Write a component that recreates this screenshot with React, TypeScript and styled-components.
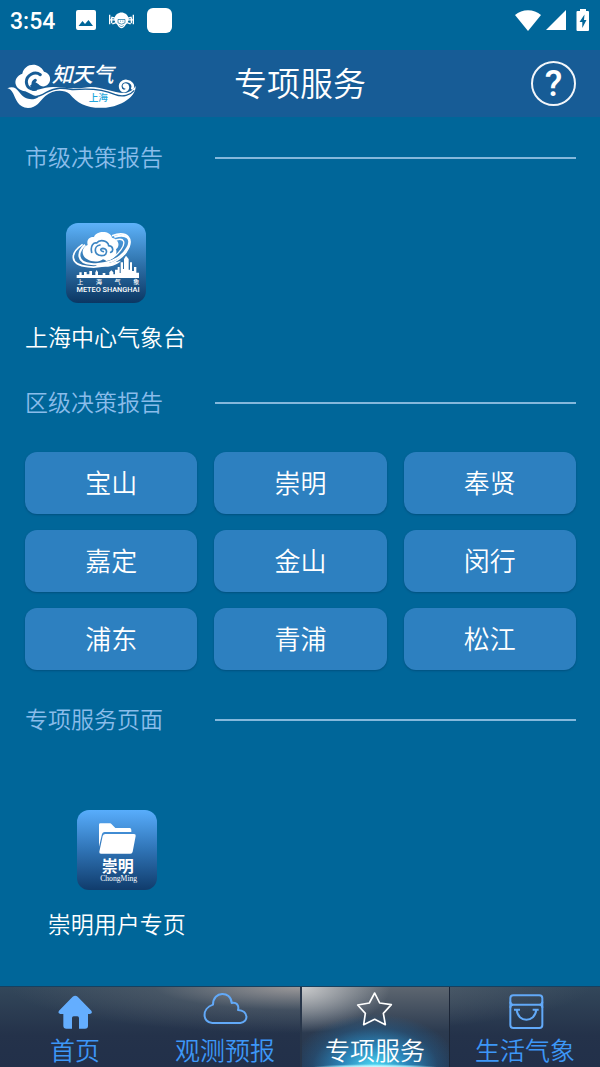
import styled, { createGlobalStyle } from 'styled-components'

const GlobalStyle = createGlobalStyle`
    * {
        box-sizing: border-box;
    }
    body {
        margin: 0;
        background: #006699;
        color: #fff;
        font-family: "Noto Sans CJK SC", sans-serif;
        font-weight: 350;
    }
    a {
        color: inherit;
        text-decoration: none;
    }
    button {
        font: inherit;
        color: inherit;
        cursor: pointer;
    }
`;

const Page = styled.div`
    display: flex;
    flex-direction: column;
    min-height: 100vh;
`;

const StatusBar = styled.div`
    display: flex;
    align-items: center;
    justify-content: space-between;
    height: 50px;
    padding: 0 10px 10px;
`;

const StatusGroup = styled.div<{ $gap: number }>`
    display: flex;
    align-items: center;
    gap: ${({ $gap }) => $gap}px;
`;

const Clock = styled.span`
    font-family: Roboto, sans-serif;
    font-size: 23px;
    font-weight: 500;
    line-height: 24px;
    padding: 3px 8px 0 0;
`;

const AppBadge = styled.span`
    width: 25px;
    height: 25px;
    border-radius: 6px;
    background: #fff;
`;

const Header = styled.header`
    display: grid;
    grid-template-columns: 1fr auto 1fr;
    align-items: center;
    height: 67px;
    background: #175c96;
`;

const Title = styled.h1`
    margin: 0;
    padding-bottom: 4px;
    font-size: 33px;
    font-weight: 350;
    line-height: 48px;
`;

const HelpButton = styled.button`
    justify-self: end;
    width: 45px;
    height: 45px;
    margin-right: 24px;
    padding: 0;
    border: 2px solid #f2f6fa;
    border-radius: 50%;
    background: none;
    font-family: Roboto, sans-serif;
    font-size: 36px;
    font-weight: 500;
    line-height: 42px;
`;

const Main = styled.main`
    flex: 1;
    padding: 23px 24px 0 25px;
`;

const SectionHead = styled.div`
    display: flex;
    align-items: center;
    gap: 50px;
    &::after {
        content: '';
        flex: 1;
        height: 2px;
        background: #84b8dc;
    }
`;

const SectionTitle = styled.h2`
    margin: 0;
    min-width: 140px;
    padding-bottom: 4px;
    color: #8abcea;
    font-size: 23px;
    font-weight: 350;
    line-height: 32px;
`;

const AppRow = styled.div<{ $columns?: string; $top: number; $bottom: number }>`
    display: grid;
    grid-template-columns: ${({ $columns }) => $columns || 'max-content'};
    padding: ${({ $top, $bottom }) => `${$top}px 0 ${$bottom}px`};
`;

const AppLink = styled.a`
    display: flex;
    flex-direction: column;
    align-items: center;
    gap: 16px;
    padding-bottom: 2px;
    font-size: 23px;
    line-height: 34px;
`;

const DistrictGrid = styled.div`
    display: grid;
    grid-template-columns: repeat(3, 1fr);
    gap: 16px 17px;
    padding: 31px 0 32px;
`;

const DistrictButton = styled.button`
    height: 62px;
    padding: 0 0 2px;
    border: 0;
    border-radius: 12px;
    background: #2d80c0;
    box-shadow: 0 1px 2px rgba(0, 40, 80, 0.35);
    font-size: 26px;
    line-height: 38px;
`;

const TabBar = styled.nav`
    display: grid;
    grid-template-columns: repeat(4, 1fr);
    height: 81px;
    border-top: 1px solid #17405f;
    background:
        radial-gradient(ellipse 290px 46px at 50% 0, rgba(190, 180, 175, 0.75), rgba(120, 125, 130, 0.3) 50%, transparent),
        linear-gradient(#33475a, #24324a 60%, #22304a);
`;

const Tab = styled.a<{ $active?: boolean }>`
    display: flex;
    flex-direction: column;
    align-items: center;
    padding-top: 3px;
    font-size: 25px;
    line-height: 38px;
    color: ${({ $active }) => ($active ? '#fff' : '#3d97f7')};
    ${({ $active }) => $active && `
        background:
            radial-gradient(ellipse 66px 4px at 50% 100%, #fff, rgba(180, 245, 255, 0.8) 60%, transparent),
            radial-gradient(ellipse 84px 54px at 50% 100%, #50e0fa, rgba(42, 150, 210, 0.8) 40%, rgba(36, 100, 150, 0.4) 75%, transparent),
            radial-gradient(ellipse 90px 46px at 0 0, rgba(215, 215, 215, 0.9), transparent),
            linear-gradient(#5d6670, #2c3b50 55%, #26354d);
        box-shadow: inset 2px 0 #28364a, inset -1px 0 #1b2536;
    `}
    svg {
        display: block;
    }
`;

const ImageIcon = () => (
    <svg width="20" height="20" viewBox="0 0 20 20">
        <path fill="#fff" fillRule="evenodd" d="M2 0h16a2 2 0 0 1 2 2v16a2 2 0 0 1-2 2H2a2 2 0 0 1-2-2V2a2 2 0 0 1 2-2zM2.500 16h14.500l-4.500-6-3.500 4-2.500-3z" />
    </svg>
)

const DroneIcon = () => (
    <svg width="25" height="17" viewBox="0 0 75 50">
        <path d="M2 8v28M73 8v28M8 17v16M67 17v16M2 23h20M53 23h20M7 15l19 5M68 15l-19 5M10 35l18-6M65 35l-18-6" stroke="#fff" strokeWidth="4" fill="none" />
        <path d="M16 20C20-5 55-5 59 20C58 30 54 34 50 38C43 52 32 52 25 38C21 34 17 30 16 20z" fill="#fff" />
        <path d="M27 22h21v10q-10 8-21 0zM33 27h3M40 27h3M31 40c4 4 9 4 13 0" stroke="#006699" strokeWidth="2" fill="none" />
    </svg>
)

const WifiIcon = () => (
    <svg width="26" height="21" viewBox="0 0 26 21">
        <path fill="#fff" d="M0 5C7-1.500 19-1.500 26 5L13 21z" />
    </svg>
)

const SignalIcon = () => (
    <svg width="20" height="20" viewBox="0 0 20 20">
        <path fill="#fff" d="M20 0v20H0z" />
    </svg>
)

const BatteryIcon = () => (
    <svg width="14" height="22" viewBox="0 0 14 22">
        <path fill="#fff" d="M4 0h6v2h2q1 0 1 1v18q0 1-1 1H1.500q-1 0-1-1V3q0-1 1-1H4z" />
        <path fill="#006699" d="M8.500 5.500L3.500 13h2.800v6L10.500 11H8z" />
    </svg>
)

const Logo = () => (
    <svg width="145" height="66" viewBox="0 0 435 198" role="img" aria-label="知天气 上海">
        <path fill="#fff" d="M76 121C42 116 35 80 67 68C72 38 115 29 132 62C151 66 156 88 144 100C135 110 121 107 115 99L104 92L90 104L98 120L137 110C171 103 211 117 252 110C300 101 335 127 374 126C391 124 400 115 407 105C408 139 361 166 318 170C264 174 232 158 209 129C190 114 158 117 136 135C119 150 111 171 84 171C54 169 48 145 40 128C35 118 29 113 22 112C38 105 48 110 58 124C72 145 98 151 116 138C105 136 94 130 76 121z" />
        <path fill="none" stroke="#175c96" strokeWidth="9" strokeLinecap="round" d="M121 71C104 59 79 72 79 93C80 109 91 117 107 115M106 88C94 96 99 107 111 107" />
        <path fill="none" stroke="#175c96" strokeWidth="4" d="M74 130C99 145 120 136 139 124C171 107 190 111 219 116C271 111 314 117 344 130C369 140 391 132 403 118" />
        <path fill="none" stroke="#fff" strokeWidth="8" strokeLinecap="round" d="M376 109C367 105 374 97 382 103C388 116 372 126 363 115C355 100 368 87 381 90C394 91 402 103 397 112" />
        <text x="155" y="92" fill="#fff" fontSize="62" fontWeight="500" fontStyle="italic">知天气</text>
        <text x="266" y="151" fill="#23a7dc" fontSize="29" fontWeight="500">上海</text>
    </svg>
)

const MeteoIcon = () => (
    <svg width="80" height="80" viewBox="0 0 240 240" aria-hidden="true">
        <defs>
            <linearGradient id="meteoFill" x2="0" y2="1">
                <stop offset="0" stopColor="#5db2fa" />
                <stop offset="0.5" stopColor="#2f73ac" />
                <stop offset="1" stopColor="#0b3763" />
            </linearGradient>
        </defs>
        <rect width="240" height="240" rx="36" fill="url(#meteoFill)" />
        <g fill="none" stroke="#fff">
            <path strokeWidth="6" d="M145 42C180 31 201 45 183 76C166 108 118 128 76 123C31 119 33 88 57 65" />
            <path strokeWidth="5" d="M138 38C185 22 206 48 181 86C159 117 111 137 66 131C7 125 13 89 50 64" />
            <path strokeWidth="4" d="M150 51C175 43 180 59 165 80C153 97 139 107 119 113" />
        </g>
        <path fill="#fff" d="M64 109C43 97 47 72 65 66C60 46 76 40 84 42C91 22 134 22 138 44C159 48 163 70 150 79C158 103 129 119 111 109C98 119 76 117 64 109zM100 121C121 119 134 122 165 113C146 134 112 133 88 130z" />
        <path fill="none" stroke="#3d86c3" strokeWidth="5" strokeLinecap="round" d="M112 86C103 84 101 77 111 76C127 77 124 98 107 98C82 96 83 69 102 66M77 88C72 66 84 58 92 60C101 48 126 52 128 68C144 70 142 86 134 88" />
        <path fill="#fff" d="M32 165V156H40V148H47V156H54V147H62V154H70V144H78V156H88V148L92 141L96 148V156H110V150H118V156H130V148L136 142L142 148V154H147V140H155V132H161V150H164V118H171V138H174V108L180 98L188 108V140H192V118H198V144H204V132H211V149H219V165z" />
        <g fill="#fff" fontSize="18" fontWeight="500">
            <text x="34" y="182">上</text>
            <text x="90" y="182">海</text>
            <text x="146" y="182">气</text>
            <text x="202" y="182">象</text>
        </g>
        <text x="126" y="206" textAnchor="middle" fill="#fff" fontSize="22" fontFamily="Roboto, sans-serif" fontWeight="500">METEO SHANGHAI</text>
    </svg>
)

const FolderIcon = () => (
    <svg width="80" height="80" viewBox="0 0 240 240" aria-hidden="true">
        <defs>
            <linearGradient id="folderFill" x2="0" y2="1">
                <stop offset="0" stopColor="#58adfc" />
                <stop offset="0.5" stopColor="#2f73b5" />
                <stop offset="1" stopColor="#103c6c" />
            </linearGradient>
        </defs>
        <rect width="240" height="240" rx="36" fill="url(#folderFill)" />
        <path fill="#fff" d="M66 110V44q0-4 4-4h29q3 0 5 3l11 11h43q5 0 5 6v6H83q-6 0-8 6z" />
        <path fill="#fff" d="M85 72h86q6 0 5 6l-9 47q-1 6-7 6H72q-6 0-5-6l10-47q2-6 8-6z" />
        <text x="122" y="185" textAnchor="middle" fill="#fff" fontSize="48" fontWeight="700">崇明</text>
        <text x="125" y="212" textAnchor="middle" fill="#fff" fontSize="23" fontWeight="400" fontFamily="'Liberation Serif', serif">ChongMing</text>
    </svg>
)

const HomeIcon = () => (
    <svg width="48" height="40" viewBox="0 0 144 120">
        <path fill="#64aeff" d="M65 20q8-6 15 0l41 42q5 8-4 10h-6v35q0 9-9 9H84V84q0-5-5-5H68q-5 0-5 5v32H46q-9 0-9-9V72h-9q-9-2-4-10z" />
    </svg>
)

const CloudIcon = () => (
    <svg width="48" height="40" viewBox="0 0 144 120">
        <path fill="none" stroke="#62a9f8" strokeWidth="6" strokeLinejoin="round" d="M34 99C4 98 1 55 36 44C36 2 90 2 92 39C106 35 115 46 111 60C143 61 144 97 118 99z" />
    </svg>
)

const StarIcon = () => (
    <svg width="48" height="40" viewBox="0 0 144 120">
        <path fill="none" stroke="#fff" strokeWidth="5" strokeLinejoin="round" d="M71 9L86 39L121 44L97 70L103 104L71 88L38 104L43 70L20 45L55 39z" />
    </svg>
)

const BagIcon = () => (
    <svg width="48" height="40" viewBox="0 0 144 120">
        <g fill="none" stroke="#62a9f8" strokeWidth="6">
            <rect x="28" y="16" width="96" height="98" rx="9" />
            <path d="M28 35q0 9 9 9h78q9 0 9-9M28 53q0-9 9-9M124 53q0-9-9-9M39 59h18M95 59h18M47 59C50 99 102 99 106 59" />
        </g>
    </svg>
)

const districts = ['宝山', '崇明', '奉贤', '嘉定', '金山', '闵行', '浦东', '青浦', '松江']

const tabs = [
    { label: '首页', Icon: HomeIcon },
    { label: '观测预报', Icon: CloudIcon },
    { label: '专项服务', Icon: StarIcon, active: true },
    { label: '生活气象', Icon: BagIcon },
]

export default function App(){

    return(
        <Page>
            <GlobalStyle />

            <StatusBar>
                <StatusGroup $gap={13}>
                    <Clock>3:54</Clock>
                    <ImageIcon />
                    <DroneIcon />
                    <AppBadge />
                </StatusGroup>
                <StatusGroup $gap={5}>
                    <WifiIcon />
                    <SignalIcon />
                    <span />
                    <BatteryIcon />
                </StatusGroup>
            </StatusBar>

            <Header>
                <Logo />
                <Title>专项服务</Title>
                <HelpButton type="button">?</HelpButton>
            </Header>

            <Main>
                <SectionHead>
                    <SectionTitle>市级决策报告</SectionTitle>
                </SectionHead>
                <AppRow $top={47} $bottom={30}>
                    <AppLink href="#meteo">
                        <MeteoIcon />
                        上海中心气象台
                    </AppLink>
                </AppRow>

                <SectionHead>
                    <SectionTitle>区级决策报告</SectionTitle>
                </SectionHead>
                <DistrictGrid>
                    {districts.map((name) => (
                        <DistrictButton key={name} type="button">{name}</DistrictButton>
                    ))}
                </DistrictGrid>

                <SectionHead>
                    <SectionTitle>专项服务页面</SectionTitle>
                </SectionHead>
                <AppRow $columns="repeat(3, 1fr)" $top={72} $bottom={30}>
                    <AppLink href="#chongming">
                        <FolderIcon />
                        崇明用户专页
                    </AppLink>
                </AppRow>
            </Main>

            <TabBar>
                {tabs.map(({ label, Icon, active }) => (
                    <Tab key={label} href={`#${label}`} $active={active}>
                        <Icon />
                        {label}
                    </Tab>
                ))}
            </TabBar>
        </Page>
    )
}
